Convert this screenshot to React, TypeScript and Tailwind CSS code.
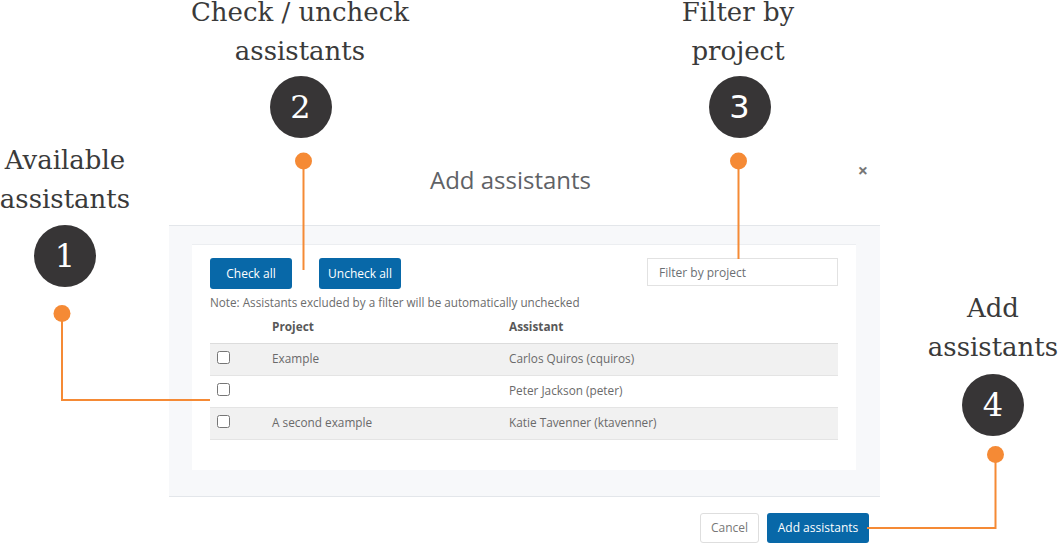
import type React from "react";

const rows = [
  { project: "Example", assistant: "Carlos Quiros (cquiros)" },
  { project: "", assistant: "Peter Jackson (peter)" },
  { project: "A second example", assistant: "Katie Tavenner (ktavenner)" },
];

const serif = { fontFamily: '"DejaVu Serif", serif' };

const Label: React.FC<{ x: number; y: number; lines: string[] }> = ({ x, y, lines }) => (
  <div
    className="absolute -translate-x-1/2 text-center text-[26px] leading-[39px] text-[#3a3a3a] whitespace-nowrap"
    style={{ ...serif, left: x, top: y }}
  >
    {lines.map((l) => (
      <div key={l}>{l}</div>
    ))}
  </div>
);

const Badge: React.FC<{ x: number; y: number; n: string; sans?: boolean }> = ({ x, y, n, sans }) => (
  <div
    className="absolute size-[62px] -translate-x-1/2 -translate-y-1/2 rounded-full bg-[#373536] flex items-center justify-center text-white text-[32px]"
    style={{ left: x, top: y, fontFamily: sans ? '"DejaVu Sans", sans-serif' : '"DejaVu Serif", serif' }}
  >
    {n}
  </div>
);

const App: React.FC = () => {
  return (
    <div
      className="relative w-[1059px] h-[554px] bg-white overflow-hidden"
      style={{ fontFamily: '"Open Sans", sans-serif' }}
    >
      {/* Modal */}
      <div className="ml-[169px] w-[711px] flex flex-col">
        {/* Header */}
        <div className="h-[225px] pt-[165px] flex items-start">
          <h3 className="flex-1 text-center text-[24px] leading-[30px] text-[#5f6266]">
            Add assistants
          </h3>
          <button className="w-[22px] mr-[6px] mt-[-10px] text-[18px] leading-[30px] font-bold text-[#777] text-center">
            ×
          </button>
        </div>

        {/* Body */}
        <div className="h-[272px] bg-[#f7f8fa] border-t border-b border-[#e3e6ea] pt-[18px] pl-[23px] pr-[24px]">
          <div className="h-[226px] bg-white border-t border-[#eceef1] px-[18px] pt-[13px]">
            <div className="flex items-start justify-between">
              <div className="flex gap-[27px]">
                <button className="w-[82px] h-[31px] rounded-[3px] bg-[#0868a8] text-white text-[12px]">
                  Check all
                </button>
                <button className="w-[82px] h-[31px] rounded-[3px] bg-[#0868a8] text-white text-[12px]">
                  Uncheck all
                </button>
              </div>
              <input
                className="w-[191px] h-[28px] border border-[#e2e2e2] px-[11px] text-[12px] placeholder:text-[#6b6f73] outline-none"
                placeholder="Filter by project"
                type="text"
              />
            </div>
            <p className="mt-[4px] text-[11.7px] leading-[18px] text-[#6c6c6c]">
              Note: Assistants excluded by a filter will be automatically unchecked
            </p>
            <table className="w-full border-collapse text-[11.8px] text-[#6a6a6a]">
              <thead>
                <tr className="h-[32px] border-b border-[#dcdcdc]">
                  <th className="w-[52px]"></th>
                  <th className="w-[237px] pl-[10px] text-left font-bold text-[#585858]">Project</th>
                  <th className="pl-[10px] text-left font-bold text-[#585858]">Assistant</th>
                </tr>
              </thead>
              <tbody>
                {rows.map((r, i) => (
                  <tr
                    key={r.assistant}
                    className={`h-[32px] border-b border-[#e4e4e4] ${i % 2 === 0 ? "bg-[#f1f1f1]" : "bg-white"}`}
                  >
                    <td className="pl-[7px] align-top pt-[7px]">
                      <input type="checkbox" className="size-[13px] m-0" />
                    </td>
                    <td className="pl-[10px]">{r.project}</td>
                    <td className="pl-[10px]">{r.assistant}</td>
                  </tr>
                ))}
              </tbody>
            </table>
          </div>
        </div>

        {/* Footer */}
        <div className="flex justify-end gap-[8px] pt-[16px] pr-[11px]">
          <button className="w-[59px] h-[30px] rounded-[3px] border border-[#dedede] bg-white text-[12px] text-[#777]">
            Cancel
          </button>
          <button className="w-[102px] h-[30px] rounded-[3px] bg-[#0868a8] text-white text-[12px]">
            Add assistants
          </button>
        </div>
      </div>

      {/* Annotations */}
      <svg className="absolute inset-0 pointer-events-none" width="1059" height="554">
        <g stroke="#f58a35" strokeWidth="2" fill="none">
          <polyline points="62,313 62,400 210,400" />
          <line x1="303.5" y1="161" x2="303.5" y2="270" />
          <line x1="738.5" y1="161" x2="738.5" y2="259" />
          <polyline points="995.5,455 995.5,528 867,528" />
        </g>
        <g fill="#f58a35">
          <circle cx="62" cy="313.5" r="8.5" />
          <circle cx="303.5" cy="161" r="8.5" />
          <circle cx="738.5" cy="161" r="8.5" />
          <circle cx="995.5" cy="454.5" r="8.5" />
        </g>
      </svg>

      <Label x={65} y={141} lines={["Available", "assistants"]} />
      <Label x={300} y={-7} lines={["Check / uncheck", "assistants"]} />
      <Label x={738} y={-7} lines={["Filter by", "project"]} />
      <Label x={993} y={289} lines={["Add", "assistants"]} />

      <Badge x={65} y={256} n="1" />
      <Badge x={300.5} y={107} n="2" />
      <Badge x={739.5} y={107} n="3" sans />
      <Badge x={993} y={404.5} n="4" />
    </div>
  );
};

export default App;
